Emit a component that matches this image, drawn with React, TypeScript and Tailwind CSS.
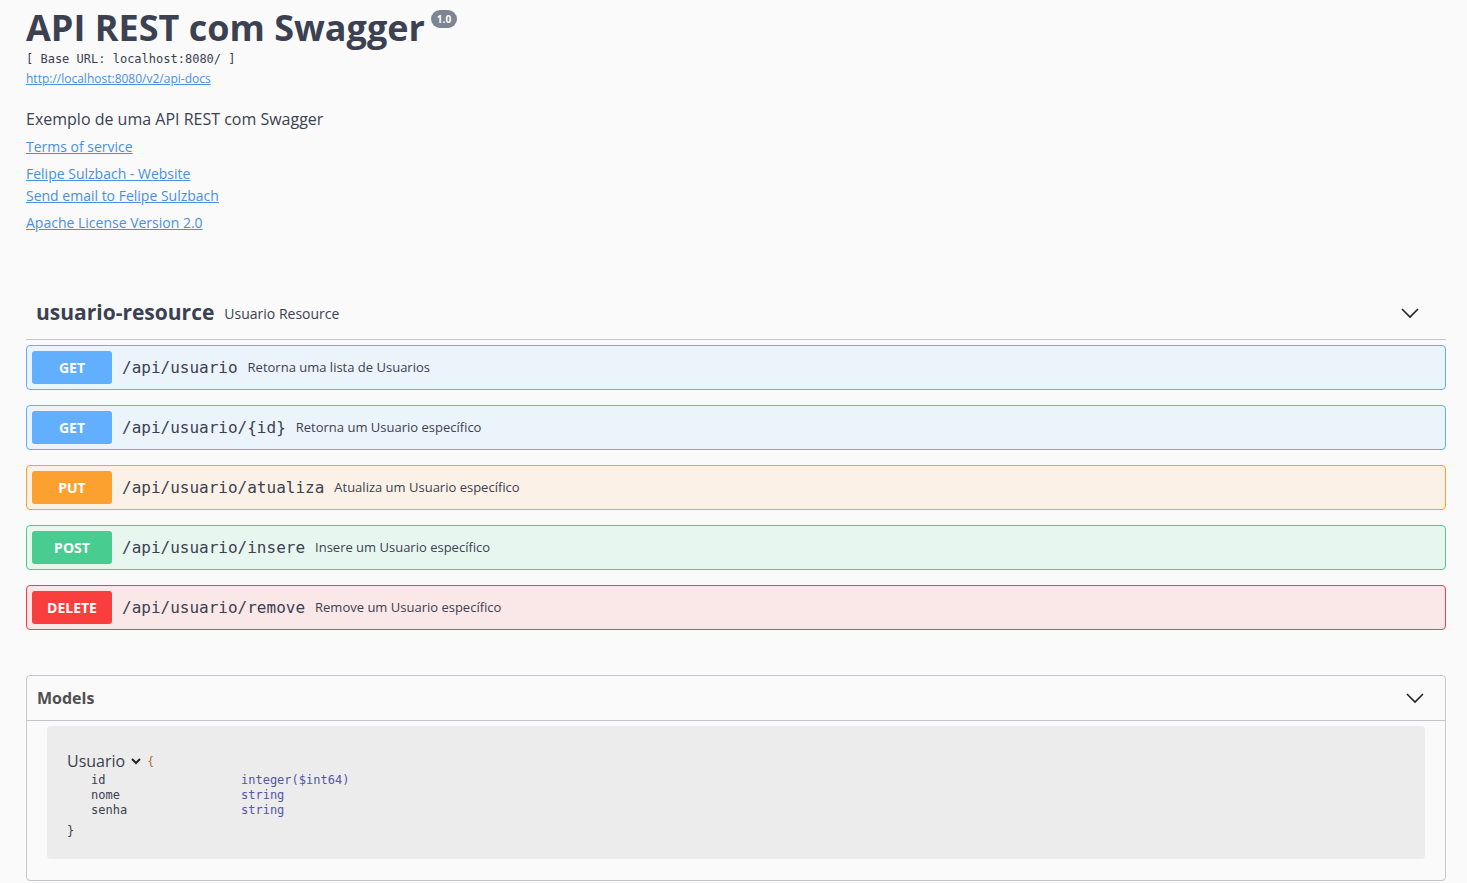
const sans = "font-['Open_Sans',sans-serif]";
const mono = "font-['DejaVu_Sans_Mono',monospace]";

type Op = {
  method: string;
  path: string;
  summary: string;
  box: string;
  badge: string;
};

const ops: Op[] = [
  {
    method: 'GET',
    path: '/api/usuario',
    summary: 'Retorna uma lista de Usuarios',
    box: 'bg-[#ebf3fb] border-[#61affe]',
    badge: 'bg-[#61affe]',
  },
  {
    method: 'GET',
    path: '/api/usuario/{id}',
    summary: 'Retorna um Usuario específico',
    box: 'bg-[#ebf3fb] border-[#61affe]',
    badge: 'bg-[#61affe]',
  },
  {
    method: 'PUT',
    path: '/api/usuario/atualiza',
    summary: 'Atualiza um Usuario específico',
    box: 'bg-[#fbf1e6] border-[#fca130]',
    badge: 'bg-[#fca130]',
  },
  {
    method: 'POST',
    path: '/api/usuario/insere',
    summary: 'Insere um Usuario específico',
    box: 'bg-[#e8f6f0] border-[#49cc90]',
    badge: 'bg-[#49cc90]',
  },
  {
    method: 'DELETE',
    path: '/api/usuario/remove',
    summary: 'Remove um Usuario específico',
    box: 'bg-[#fae7e7] border-[#f93e3e]',
    badge: 'bg-[#f93e3e]',
  },
];

function Chevron({ className }: { className?: string }) {
  return (
    <svg className={className} viewBox="0 0 20 20" fill="none" stroke="currentColor" strokeWidth={1.6}>
      <path d="M2 6l8 8 8-8" />
    </svg>
  );
}

function OpBlock({ op }: { op: Op }) {
  return (
    <div className={`mb-[15px] border rounded-[4px] ${op.box}`}>
      <div className="flex items-center p-[5px]">
        <span
          className={`${op.badge} w-[80px] h-[33px] rounded-[3px] flex items-center justify-center text-white text-[14px] font-bold`}
        >
          {op.method}
        </span>
        <span className={`${mono} text-[16px] text-[#3b4151] pl-[10px] pr-[10px]`}>{op.path}</span>
        <span className="text-[13px] text-[#3b4151]">{op.summary}</span>
      </div>
    </div>
  );
}

export default function App() {
  return (
    <div className={`${sans} min-h-screen bg-[#fafafa] text-[#3b4151] pl-[26px] pr-[21px]`}>
      <div className="pt-[4px]">
        <div className="flex items-start">
          <h2 className="text-[36px] font-bold leading-[48px]">API REST com Swagger</h2>
          <span className="ml-[6px] mt-[6px] h-[18px] px-[6px] rounded-full bg-[#7d8492] text-white text-[10px] font-bold leading-[18px]">
            1.0
          </span>
        </div>
        <div className={`${mono} text-[12px] leading-[16px] mt-[-1px] text-[#3b4151]`}>[ Base URL: localhost:8080/ ]</div>
        <a className="block text-[12px] leading-[20px] text-[#4990e2] underline mt-[2px]">http://localhost:8080/v2/api-docs</a>

        <p className="text-[16px] leading-[24px] mt-[18px]">Exemplo de uma API REST com Swagger</p>
        <a className="block text-[14px] leading-[20px] text-[#4990e2] underline mt-[6px]">Terms of service</a>
        <a className="block text-[14px] leading-[20px] text-[#4990e2] underline mt-[7px]">Felipe Sulzbach - Website</a>
        <a className="block text-[14px] leading-[20px] text-[#4990e2] underline mt-[2px]">Send email to Felipe Sulzbach</a>
        <a className="block text-[14px] leading-[20px] text-[#4990e2] underline mt-[7px]">Apache License Version 2.0</a>
      </div>

      <div className="mt-[54px]">
        <div className="flex items-center h-[53px] pl-[10px] pr-[26px] border-b border-[#c4c6cb] mb-[5px]">
          <span className="text-[21px] font-bold">usuario-resource</span>
          <span className="text-[14px] ml-[10px]">Usuario Resource</span>
          <span className="flex-1" />
          <Chevron className="w-[20px] h-[20px] text-[#222]" />
        </div>
        {ops.map((op, i) => (
          <OpBlock key={i} op={op} />
        ))}
      </div>

      <div className="mt-[45px] border border-[#c4c6cb] rounded-[4px]">
        <div className="flex items-center h-[45px] pl-[10px] pr-[20px] border-b border-[#c4c6cb]">
          <span className="text-[16px] font-bold text-[#505050]">Models</span>
          <span className="flex-1" />
          <Chevron className="w-[20px] h-[20px] text-[#222]" />
        </div>
        <div className="mx-[20px] mt-[5px] mb-[21px] bg-[#ececec] rounded-[4px] pl-[20px] pt-[23px] pb-[20px]">
          <div className="flex items-center">
            <span className="text-[16px] text-[#3b4151]">Usuario</span>
            <svg className="w-[12px] h-[12px] ml-[5px] text-[#222]" viewBox="0 0 12 12" fill="none" stroke="currentColor" strokeWidth={2}>
              <path d="M2 4l4 4 4-4" />
            </svg>
            <span className="ml-[6px] text-[#b06a2b] text-[13px]">{'{'}</span>
          </div>
          <div className={`${mono} text-[12px] leading-[15px] pl-[24px]`}>
            <div className="flex">
              <span className="w-[150px]">id</span>
              <span className="text-[#55a]">integer($int64)</span>
            </div>
            <div className="flex">
              <span className="w-[150px]">nome</span>
              <span className="text-[#55a]">string</span>
            </div>
            <div className="flex">
              <span className="w-[150px]">senha</span>
              <span className="text-[#55a]">string</span>
            </div>
          </div>
          <div className={`${mono} text-[12px] leading-[15px] mt-[6px]`}>{'}'}</div>
        </div>
      </div>
    </div>
  );
}
